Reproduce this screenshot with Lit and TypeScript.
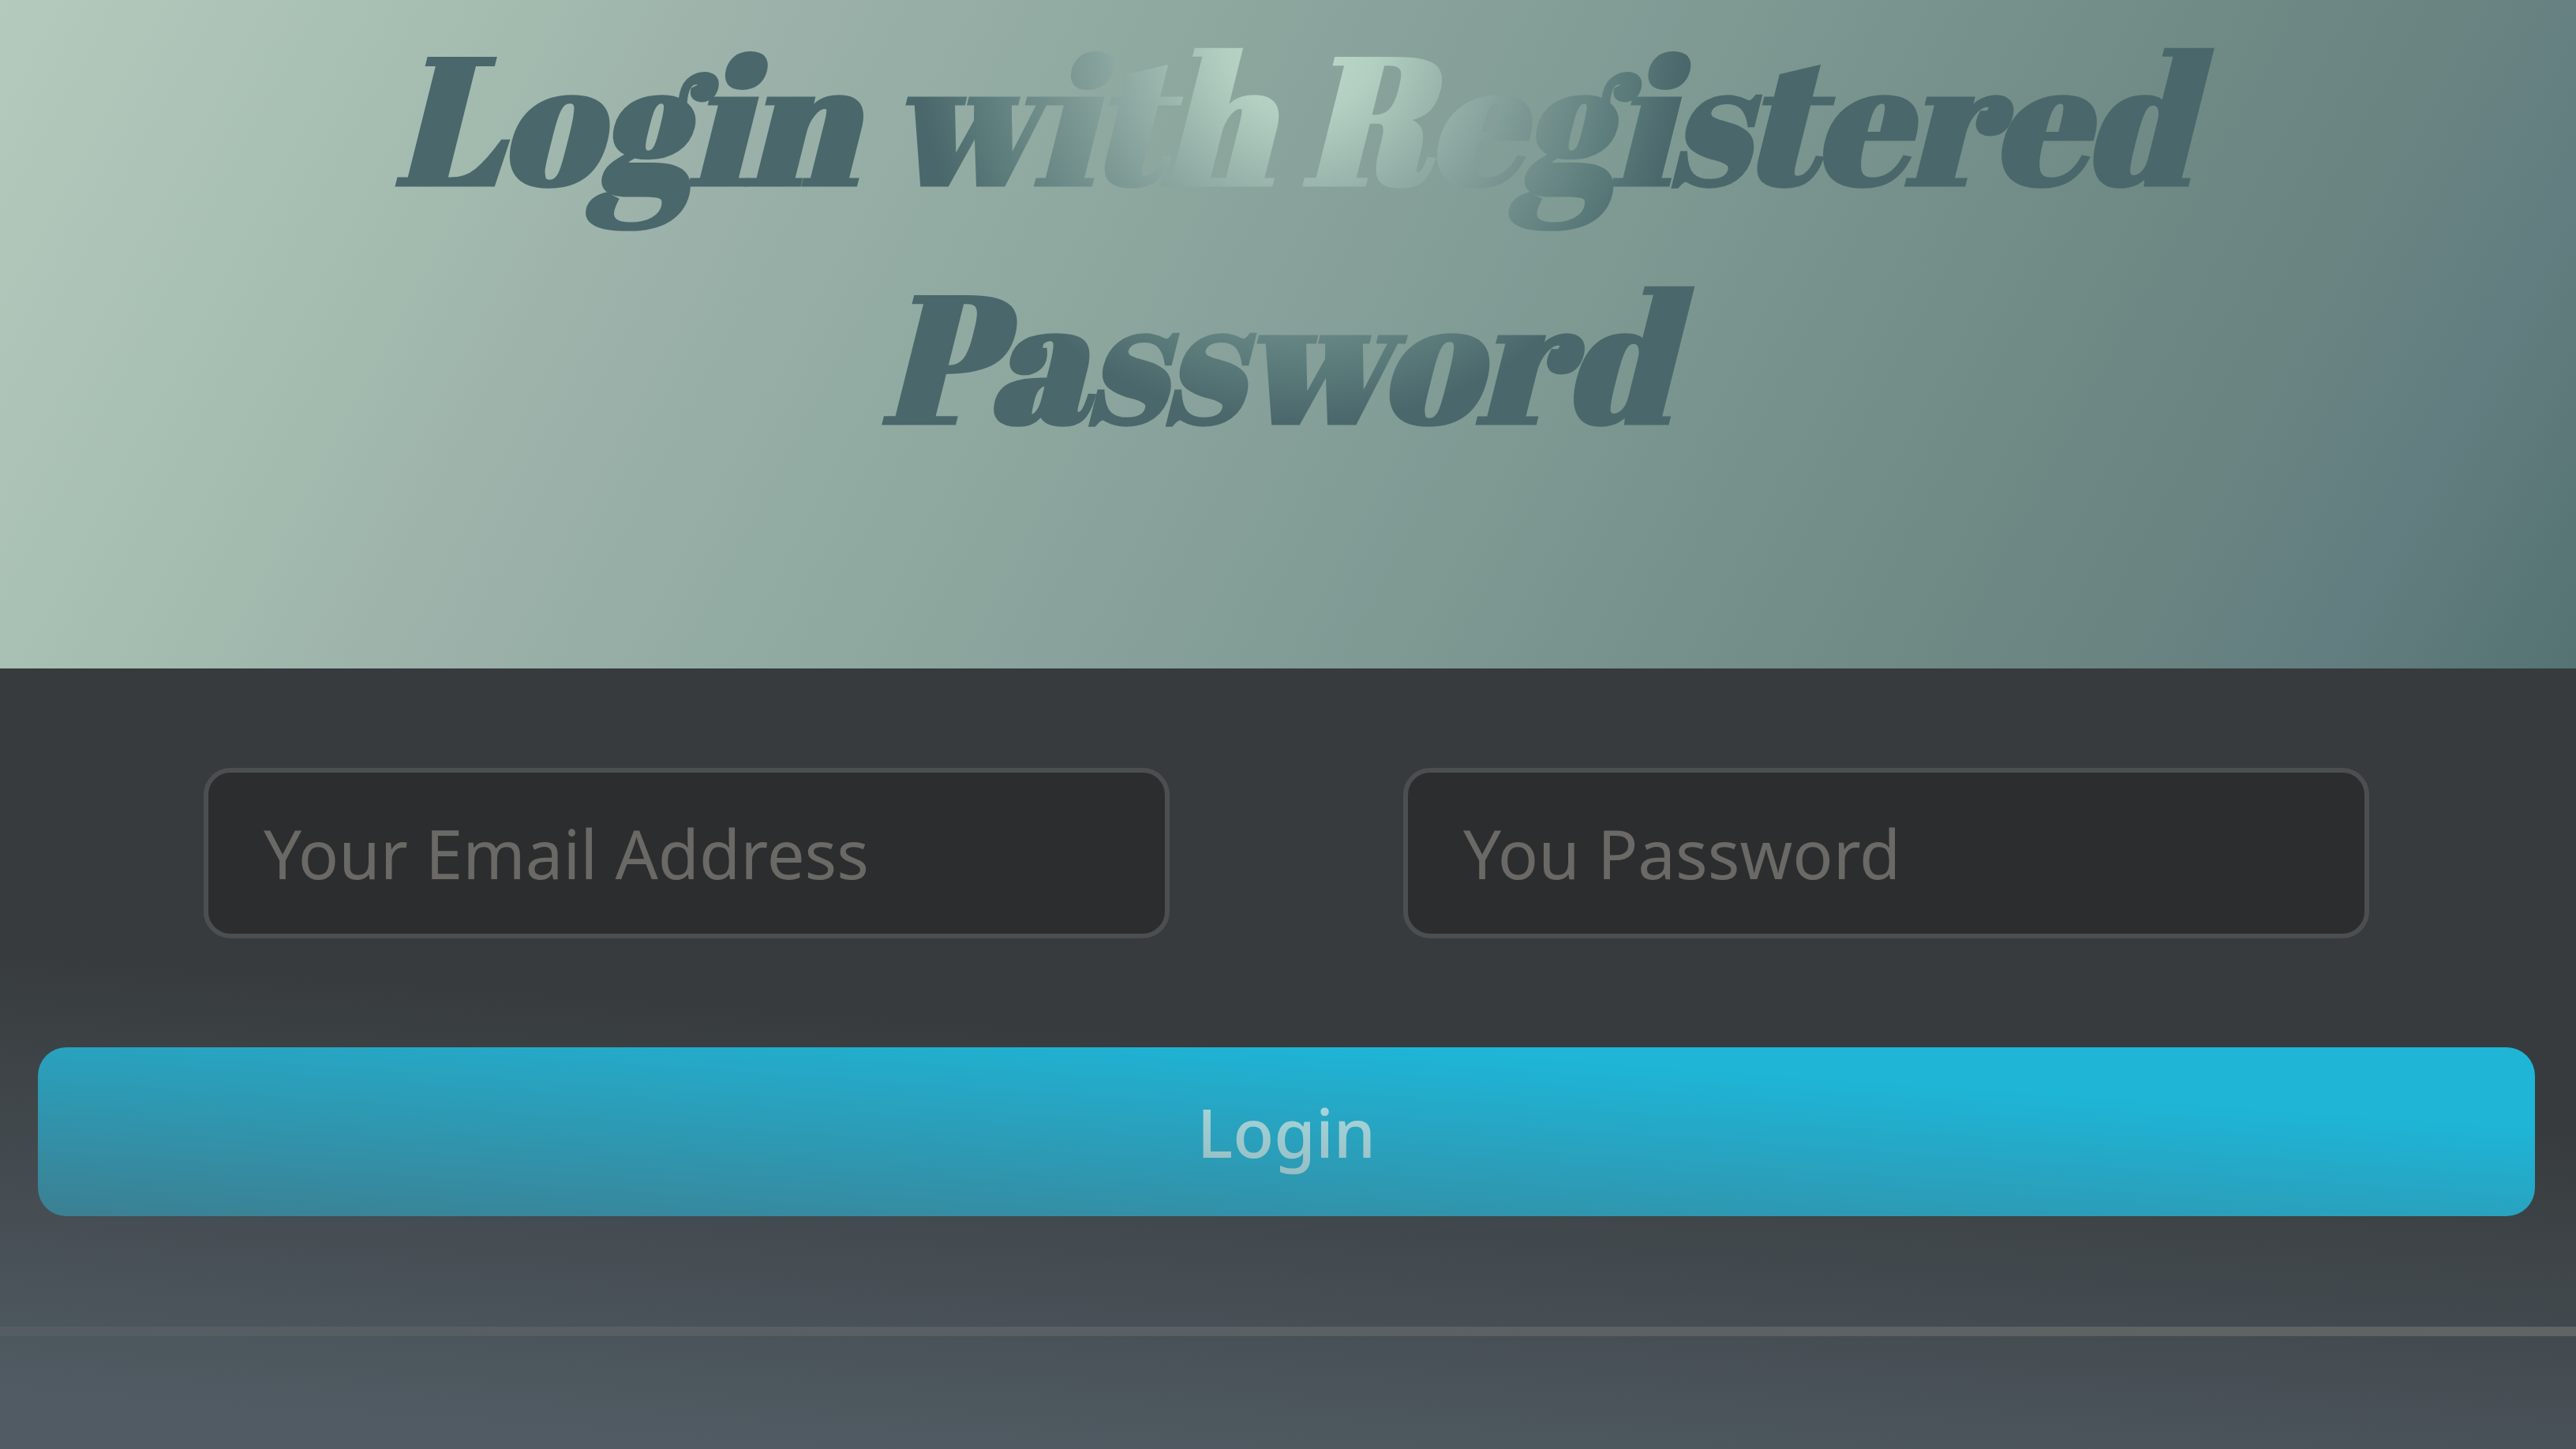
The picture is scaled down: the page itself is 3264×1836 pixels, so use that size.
import { LitElement, html, css } from "lit";
import { customElement } from "lit/decorators.js";

@customElement("app-root")
export class AppRoot extends LitElement {
  static styles = css`
    :host {
      display: flex;
      flex-direction: column;
      min-height: 100vh;
      box-sizing: border-box;
    }
    .hero {
      display: flow-root;
      padding-bottom: 247px;
      background: linear-gradient(
        118deg,
        #b3cabd 0%,
        #a7bfb2 14%,
        #9bb1a9 27%,
        #8fa9a0 40%,
        #87a09a 50%,
        #7d9992 60%,
        #738d88 72%,
        #698481 84%,
        #637e80 91%,
        #557372 100%
      );
    }
    .title {
      margin: -4px 0 0;
      padding-left: 10px;
      text-align: center;
      font: italic 700 225px/302px "Abril Fatface", "Liberation Serif", serif;
      color: transparent;
      background: radial-gradient(
        circle 488px at 50.5% 54px,
        #bcd9c9 0%,
        #b3cfc1 20%,
        #95b0a8 42%,
        #7a9692 62%,
        #5f7f7e 82%,
        #4a676b 100%
      );
      -webkit-background-clip: text;
      background-clip: text;
    }
    .form {
      position: relative;
      flex: 1;
      display: flex;
      flex-direction: column;
      padding-top: 126px;
      background: #373b3d;
      font-family: "Segoe UI", "Noto Sans", sans-serif;
    }
    /* Haze that rises from the bottom of the form over all its controls. */
    .form::after {
      content: "";
      position: absolute;
      inset: 0;
      pointer-events: none;
      background: linear-gradient(184deg, rgba(80, 91, 99, 0) 48%, #505b63 94%);
    }
    .fields {
      display: grid;
      grid-template-columns: 1fr 1fr;
      gap: 296px;
      padding: 0 262px 0 258px;
    }
    .input {
      box-sizing: border-box;
      width: 100%;
      height: 216px;
      padding: 0 70px;
      border: 6px solid #4b4f50;
      border-radius: 34px;
      background: #2c2d2e;
      color: #d0d0cc;
      font: 85px/120px "Segoe UI", "Noto Sans", sans-serif;
    }
    .input::placeholder {
      color: #6a6966;
      opacity: 1;
    }
    .submit {
      height: 214px;
      margin: 138px 52px 140px 48px;
      padding: 0;
      border: 0;
      border-radius: 36px;
      background: #1eb5d7;
      color: #b4eaee;
      font: 500 85px/120px "Segoe UI", "Noto Sans", sans-serif;
    }
    .rule {
      width: 100%;
      height: 12px;
      margin: 0;
      border: 0;
      background: #6d6b64;
    }
  `;

  render() {
    return html`
      <header class="hero">
        <h1 class="title">Login with Registered Password&nbsp;</h1>
      </header>
      <form class="form" @submit=${(e: Event) => e.preventDefault()}>
        <div class="fields">
          <input class="input" type="email" aria-label="Your Email Address" placeholder="Your Email Address" />
          <input class="input" type="password" aria-label="You Password" placeholder="You Password" />
        </div>
        <button class="submit" type="submit">Login</button>
        <hr class="rule" />
      </form>
    `;
  }
}
